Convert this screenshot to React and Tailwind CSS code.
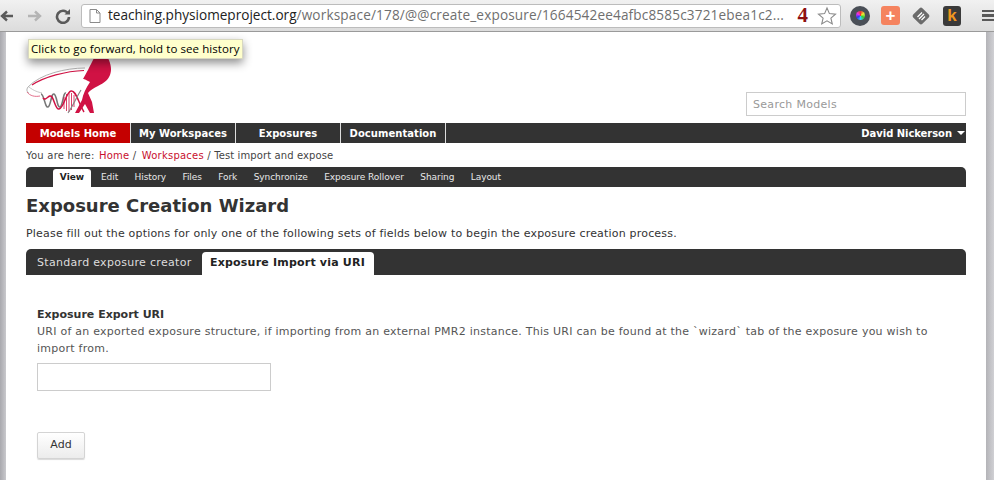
import React from 'react';

const verdana = 'font-["DejaVu_Sans",sans-serif]';

function Logo() {
  return (
    <svg width="90" height="64" viewBox="0 0 90 64" className="block">
      <path d="M68 8 L82 8 C85 14 86 20 84 25 C82 30 78 33 72 36 C68 38 64 40 62 43 L66 52 L68 63 L64 63 L59 54 L53 63 L49 63 L56 50 C57 44 60 38 64 32 C60 30 59 29 57 29 C60 24 64 16 68 8 Z" fill="#d01244" />
      <path d="M59 18 C40 18 14 24 2 37 C0 40 1 42 3 43" fill="none" stroke="#a8a8a8" strokeWidth="0.9" />
      <path d="M58 20.5 C40 21 18 27 6 35" fill="none" stroke="#d01244" strokeWidth="1.2" />
      <path d="M1 42 C4 46 9 47 14 46" fill="none" stroke="#e0607f" strokeWidth="0.9" />
      <path d="M3 37 C8 41 12 42 16 43" fill="none" stroke="#b8b8b8" strokeWidth="0.8" />
      <path d="M15 44 C18 44 19 58 22 57 C25 56 25 43 28 44 C31 45 31 58 34 57 C37 56 37 42 40 43" fill="none" stroke="#777" strokeWidth="1.6" />
      <path d="M17 48 C20 52 23 43 26 47 C29 52 30 60 33 59 C38 58 40 42 45 41 C50 40 52 52 58 62" fill="none" stroke="#d01244" strokeWidth="1.5" />
      <path d="M38 47 L38 59 M40.5 44 L40.5 61 M43 43 L43 62 M45.5 43 L45.5 60 M48 45 L48 57" stroke="#d01244" strokeWidth="0.8" />
      <path d="M42 63 C47 56 50 48 55 40" fill="none" stroke="#888" strokeWidth="1.2" />
    </svg>
  );
}

function Toolbar() {
  return (
    <div className="h-[32px] shrink-0 flex items-center bg-gradient-to-b from-[#f1f1f1] to-[#dcdcdc] border-b border-[#9a9a9a]">
      <svg width="14" height="12" viewBox="0 0 14 12" className="shrink-0">
        <path d="M13 6 H4 M7 1.5 L2 6 L7 10.5" fill="none" stroke="#5a5a5a" strokeWidth="2.4" />
      </svg>
      <svg width="16" height="12" viewBox="0 0 16 12" className="ml-[13px] shrink-0">
        <path d="M1 6 H12 M8 1.5 L13 6 L8 10.5" fill="none" stroke="#b4b4b4" strokeWidth="2.4" />
      </svg>
      <svg width="16" height="16" viewBox="0 0 16 16" className="ml-[12px] shrink-0">
        <path d="M13 5.5 A6 6 0 1 0 14 9" fill="none" stroke="#5a5a5a" strokeWidth="2.6" />
        <path d="M9.5 6.5 L15 6.5 L15 1 Z" fill="#5a5a5a" />
      </svg>
      <div className="ml-[10px] w-[760px] h-[24px] shrink-0 flex items-center bg-white border border-[#bcbcbc] rounded-[3px] overflow-hidden">
        <svg width="12" height="14" viewBox="0 0 12 14" className="ml-[7px] shrink-0">
          <path d="M1 .5 H7.5 L11 4 V13.5 H1 Z M7.5 .5 V4 H11" fill="#fff" stroke="#8a8a8a" />
        </svg>
        <span className='ml-[7px] text-[13.6px] font-["Open_Sans",sans-serif] text-[#222] whitespace-nowrap'>
          teaching.physiomeproject.org<span className="text-[#6f6f6f] tracking-[0.15px]">/workspace/178/@@create_exposure/1664542ee4afbc8585c3721ebea1c2...</span>
        </span>
        <span className='ml-auto text-[21px] font-bold font-["Liberation_Serif",serif] text-[#8e1010] leading-none'>4</span>
        <svg width="20" height="20" viewBox="0 0 20 20" className="ml-[9px] mr-[3px] shrink-0">
          <path d="M10 2 L12.4 7.6 L18.5 8.1 L13.9 12.1 L15.3 18 L10 14.9 L4.7 18 L6.1 12.1 L1.5 8.1 L7.6 7.6 Z" fill="#fff" stroke="#8a8a8a" strokeWidth="1.1" />
        </svg>
      </div>
      <div className="ml-[9px] w-[20px] h-[20px] shrink-0 rounded-full bg-[#4a4f57] flex items-center justify-center">
        <div className="w-[9px] h-[9px] rounded-full bg-[conic-gradient(#e33,#ee3,#3c3,#3cf,#33e,#e3e,#e33)]" />
      </div>
      <div className="ml-[11px] w-[19px] h-[19px] shrink-0 rounded-[3px] bg-[#f5835f] flex items-center justify-center text-white text-[17px] font-bold leading-none font-['Liberation_Sans',sans-serif]">+</div>
      <svg width="20" height="20" viewBox="0 0 20 20" className="ml-[11px] shrink-0">
        <rect x="3.5" y="3.5" width="13" height="13" rx="2" transform="rotate(45 10 10)" fill="#6b6b6b" />
        <path d="M6.5 11 L11 6.5 M8 13 L13 8 M10.5 14 L14 10.5" stroke="#fff" strokeWidth="1.3" />
      </svg>
      <div className='ml-[12px] w-[18px] h-[20px] shrink-0 rounded-[3px] bg-[#3a3a3a] flex items-center justify-center text-[#f0961e] text-[17px] font-bold leading-none font-["Liberation_Sans",sans-serif]'>k</div>
      <div className="ml-[21px] flex flex-col gap-[2px] shrink-0">
        <div className="w-[13px] h-[2.5px] bg-[#5a5a5a]" />
        <div className="w-[13px] h-[2.5px] bg-[#5a5a5a]" />
        <div className="w-[13px] h-[2.5px] bg-[#5a5a5a]" />
      </div>
    </div>
  );
}

const navItems = [
  { label: 'Models Home', width: 'w-[105px]', active: true },
  { label: 'My Workspaces', width: 'w-[105px]' },
  { label: 'Exposures', width: 'w-[105px]' },
  { label: 'Documentation', width: 'w-[105px]' },
];

const subTabs = ['Edit', 'History', 'Files', 'Fork', 'Synchronize', 'Exposure Rollover', 'Sharing', 'Layout'];

export default function App() {
  return (
    <div className={`w-[994px] h-[480px] overflow-hidden bg-white relative flex flex-col ${verdana}`}>
      <Toolbar />
      <div className="flex flex-1 min-h-0">
        <div className="w-[6px] shrink-0 bg-gradient-to-r from-[#a9a9ae] to-[#c9c9cd]" />
        <div className="flex-1 min-w-0 pl-[20px] pr-[20px]">
          <div className="h-[91px] flex items-end justify-between">
            <div className="mb-[9px]"><Logo /></div>
            <div className="w-[220px] h-[24px] mb-[7px] border border-[#cccccc] flex items-center pl-[6px] pt-[3px] text-[11px] text-[#999] tracking-[0.3px]">Search Models</div>
          </div>

          <div className="h-[20px] bg-[#333333] flex items-center text-[10px] font-bold text-white">
            {navItems.map((item) => (
              <div key={item.label} className={`${item.width} h-full flex items-center justify-center border-r border-[#dddddd] tracking-[0.05px] ${item.active ? 'bg-[#c40000]' : ''}`}>
                {item.label}
              </div>
            ))}
            <div className="ml-auto flex items-center gap-[5px] pr-[1px] tracking-[-0.05px]">
              <span>David Nickerson</span>
              <span className="w-0 h-0 border-x-[4px] border-x-transparent border-t-[4px] border-t-white" />
            </div>
          </div>

          <div className="h-[24px] flex items-center text-[10px] text-[#444] tracking-[0.22px]">
            You are here:&nbsp;<span className="ml-[1px] text-[#c8102e]">Home</span>&nbsp;/&nbsp;<span className="ml-[2px] text-[#c8102e]">Workspaces</span>&nbsp;/&nbsp;<span className="tracking-[0.1px]">Test import and expose</span>
          </div>

          <div className="h-[20px] bg-[#333333] rounded-t-[5px] flex items-end pl-[27px] text-[9px] text-[#e8e8e8]">
            <div className="h-[18px] w-[38px] bg-white rounded-t-[3px] flex items-center justify-center font-bold text-[#222]">View</div>
            <div className="flex h-[18px] items-center gap-[16.4px] ml-[10px] tracking-[-0.07px]">
              {subTabs.map((tab) => <span key={tab}>{tab}</span>)}
            </div>
          </div>

          <h1 className="mt-[8px] text-[18px] leading-[22px] font-bold text-[#333]">Exposure Creation Wizard</h1>
          <p className="mt-[10px] text-[11px] leading-[14px] text-[#333] tracking-[0.19px]">
            Please fill out the options for only one of the following sets of fields below to begin the exposure creation process.
          </p>

          <div className="mt-[8px] h-[26px] bg-[#333333] rounded-t-[5px] flex items-end pl-[11px] text-[11px] tracking-[0.3px]">
            <div className="h-[23px] flex items-center text-[#dddddd]">Standard exposure creator</div>
            <div className="ml-[10px] h-[23px] w-[172px] bg-white rounded-t-[4px] flex items-center justify-center font-bold text-[#222] tracking-[0.2px]">Exposure Import via URI</div>
          </div>

          <div className="pl-[11px] pt-[32px]">
            <div className="text-[11px] leading-[16px] font-bold text-[#333]">Exposure Export URI</div>
            <p className="text-[11px] leading-[17px] text-[#555] tracking-[0.25px]">
              URI of an exported exposure structure, if importing from an external PMR2 instance. This URI can be found at the `wizard` tab of the exposure you wish to import from.
            </p>
            <div className="mt-[6px] w-[234px] h-[28px] border border-[#cccccc]" />
            <button className="mt-[41px] w-[48px] h-[27px] block border border-[#d4d4d4] rounded-[2px] bg-gradient-to-b from-white to-[#ececec] shadow-[0_1px_1px_rgba(0,0,0,0.15)] text-[11px] text-[#333]">Add</button>
          </div>
        </div>
        <div className="w-[8px] shrink-0 bg-gradient-to-r from-[#b4b4b8] to-[#d0d0d4]" />
      </div>

      <div className='absolute left-[28px] top-[39px] h-[20px] px-[2px] flex items-center bg-[#ffffcc] border border-[#d8d8c0] text-[11.5px] tracking-[0.08px] text-black font-["Open_Sans",sans-serif] whitespace-nowrap shadow-[0_4px_10px_rgba(0,0,0,0.45)] w-[215px]'>
        Click to go forward, hold to see history
      </div>
    </div>
  );
}
